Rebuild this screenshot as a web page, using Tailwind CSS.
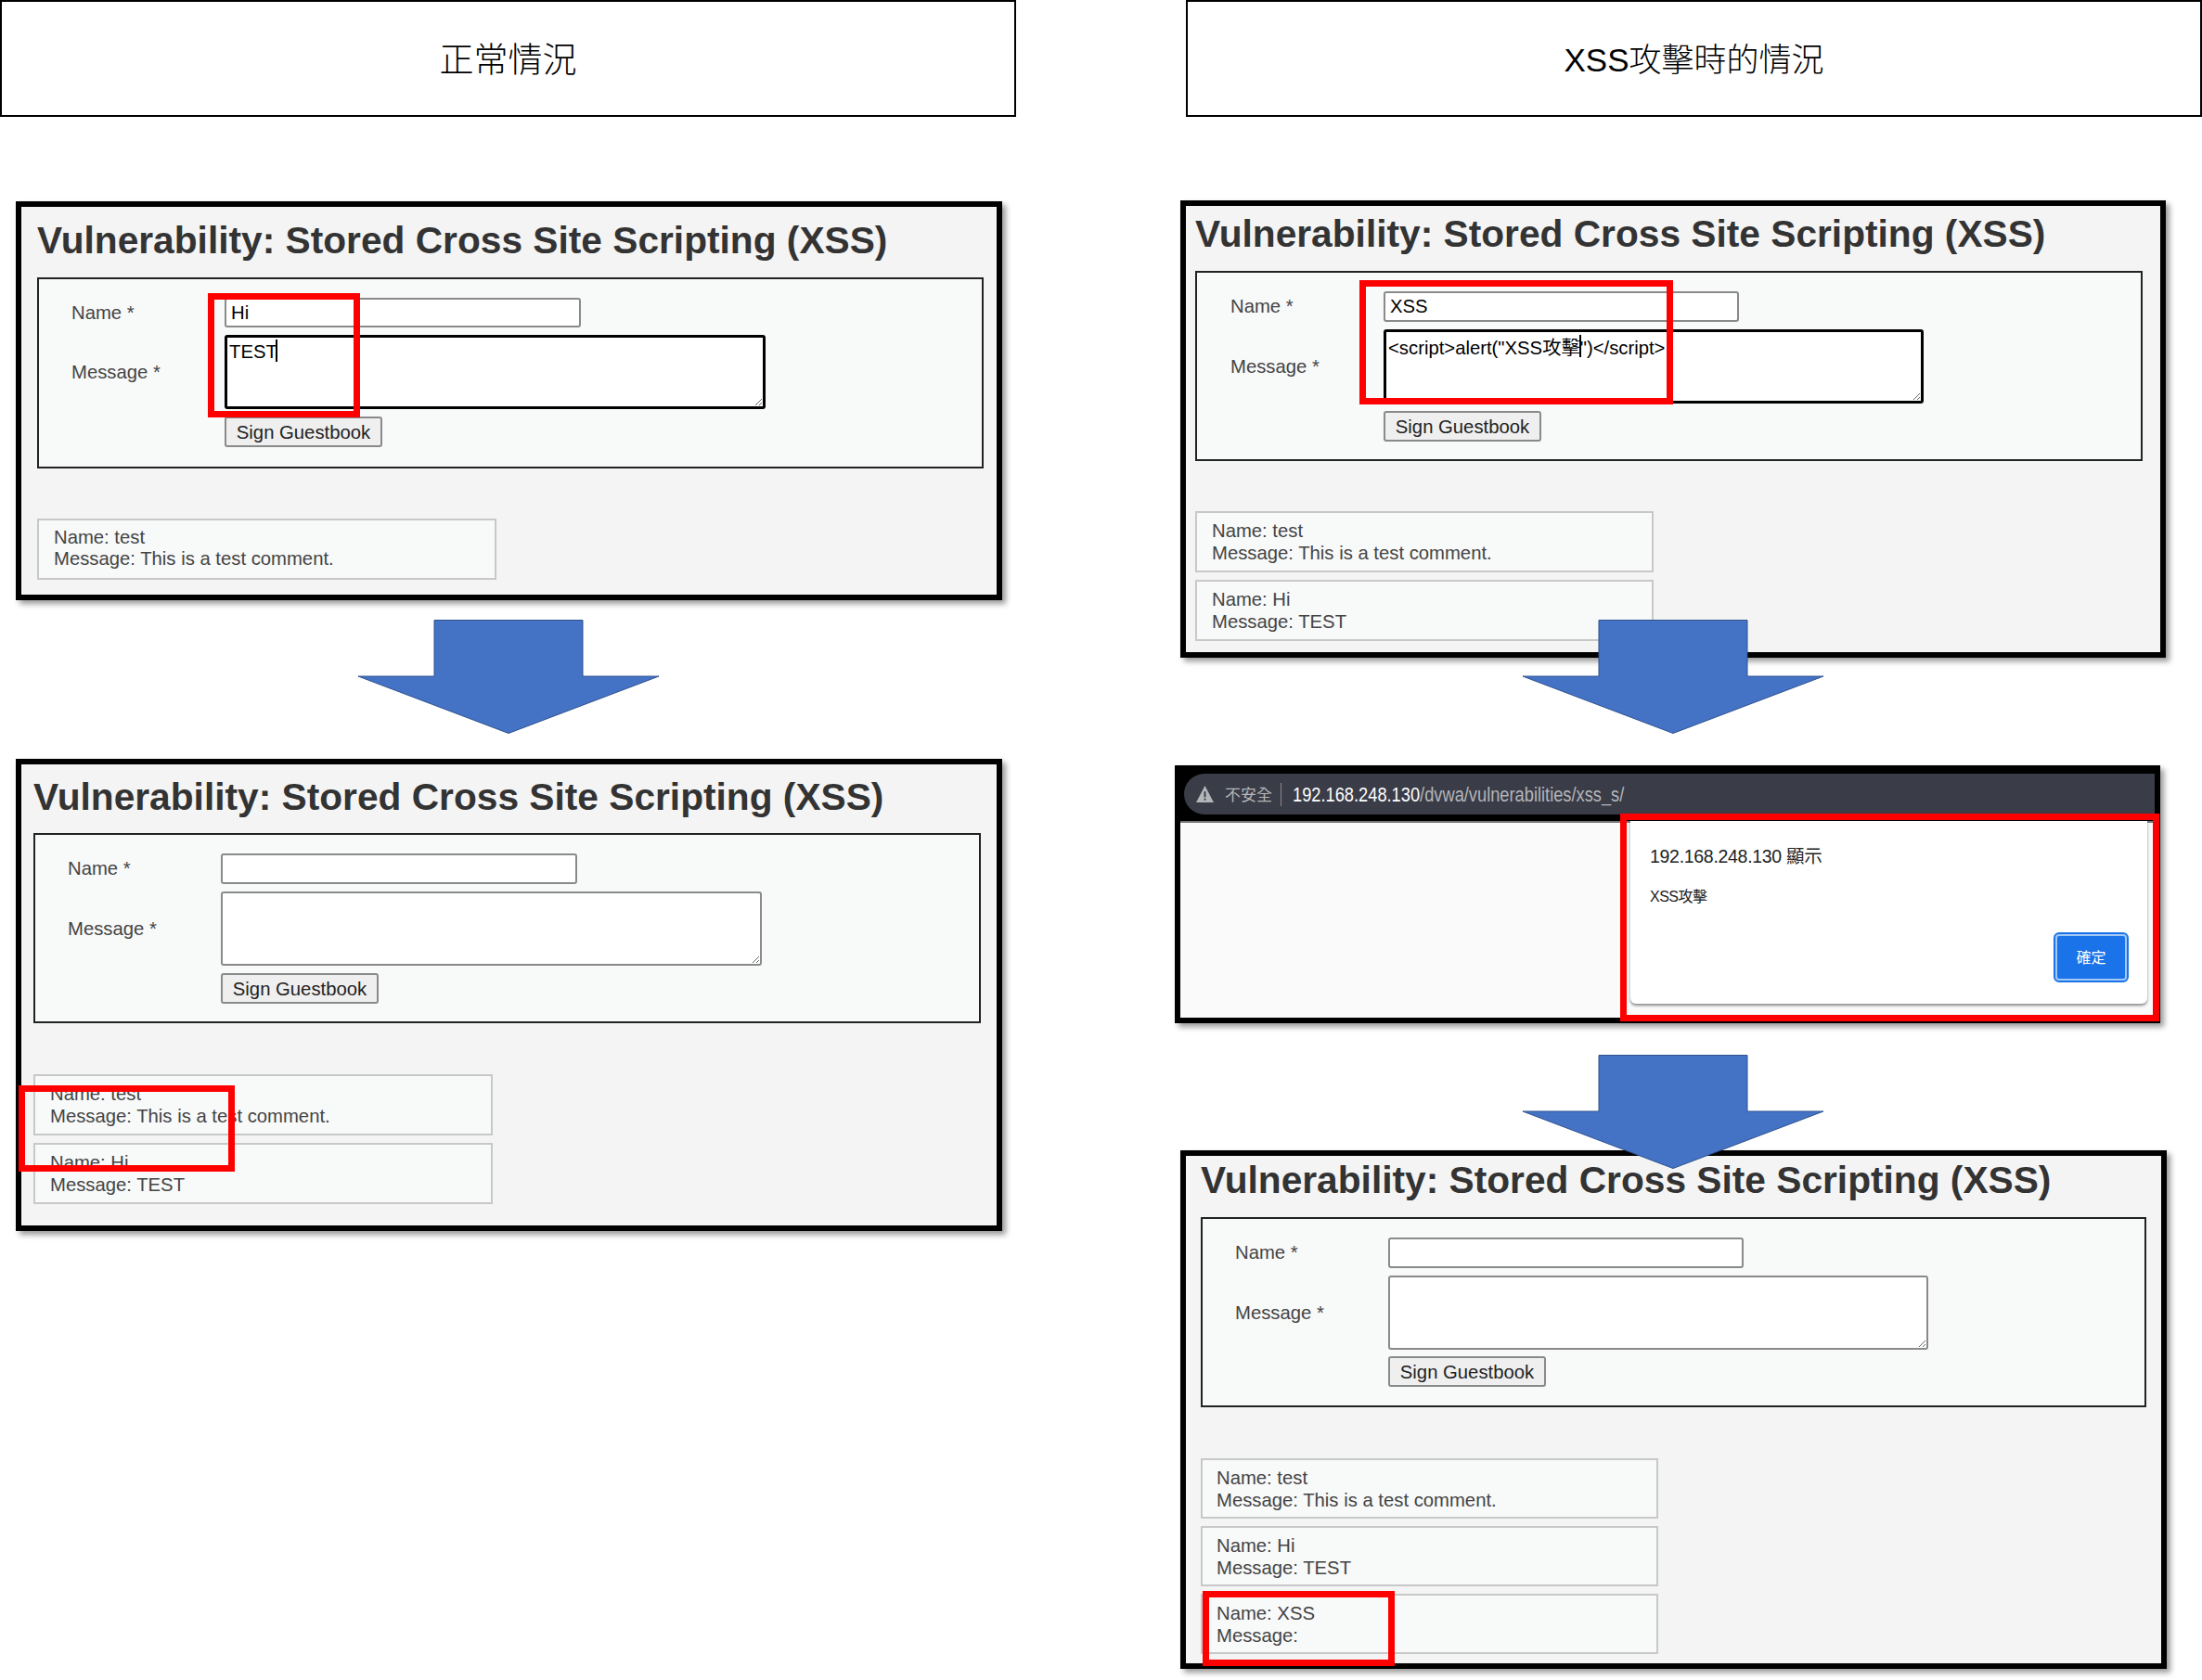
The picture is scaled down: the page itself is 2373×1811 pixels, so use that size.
<!DOCTYPE html>
<html lang="zh-Hant">
<head>
  <meta charset="UTF-8" />
  <script src="https://cdn.jsdelivr.net/npm/@tailwindcss/browser@4"></script>
  <title>XSS</title>
</head>
<body class="bg-white">
<div class="relative w-[2373px] h-[1811px] overflow-hidden bg-white text-[#333] font-['Liberation_Sans','Noto_Sans_CJK_TC',sans-serif]">

  <!-- Column titles -->
  <div class="absolute left-0 top-0 w-[1095px] h-[126px] border-2 border-black flex items-center justify-center text-[37px] font-light text-black font-['Noto_Sans_CJK_TC',sans-serif]">正常情況</div>
  <div class="absolute left-[1278px] top-0 w-[1095px] h-[126px] border-2 border-black flex items-center justify-center pt-[5px] text-[35px] font-light text-black font-['Liberation_Sans','Noto_Sans_CJK_TC',sans-serif]">XSS攻擊時的情況</div>

  <!-- Normal: before -->
  <div class="absolute left-[17px] top-[217px] w-[1063px] h-[430px] border-[6px] border-black bg-[#f4f4f4] shadow-[4px_4px_6px_rgba(0,0,0,0.4)] pl-[17px] pr-[14px] pt-[12px]">
    <h1 class="h-[50px] mb-[14px] flex items-center text-[40.7px] font-bold whitespace-nowrap">Vulnerability: Stored Cross Site Scripting (XSS)</h1>
    <div class="h-[206px] border-2 border-[#222] bg-[#f8f9f9] pl-[35px] pt-[20px] text-[20.3px] text-[#444]">
      <div class="flex items-center h-[32px] mb-[8px]">
        <span class="w-[165px]">Name *</span>
        <input value="Hi" class="w-[384px] h-[32px] bg-white border-2 border-[#8a8a8a] rounded-[3px] px-[5px] text-black" />
      </div>
      <div class="flex items-center h-[80px] mb-[8px]">
        <span class="w-[165px]">Message *</span>
        <div class="relative">
          <textarea class="block w-[583px] h-[80px] bg-white border-[3px] border-black rounded-[3px] px-[2px] py-0 text-black">TEST</textarea>
          <span class="absolute left-[55px] top-[5px] w-[2px] h-[24px] bg-black"></span>
        </div>
      </div>
      <div class="pl-[165px]">
        <button class="w-[170px] h-[33px] bg-[#efefef] border-2 border-[#8a8a8a] rounded-[3px] text-[#222]">Sign Guestbook</button>
      </div>
    </div>
    <div class="mt-[54px] flex flex-col gap-[8px] text-[20.3px] leading-[23px] text-[#444]">
      <div class="w-[495px] h-[66px] border-2 border-[#c8c8c8] bg-[#f8f9f9] pl-[16px] pt-[7px]">Name: test<br />Message: This is a test comment.</div>
    </div>
  </div>

  <!-- Normal: after -->
  <div class="absolute left-[17px] top-[818px] w-[1063px] h-[509px] border-[6px] border-black bg-[#f4f4f4] shadow-[4px_4px_6px_rgba(0,0,0,0.4)] pl-[13px] pr-[17px] pt-[11px]">
    <h1 class="h-[50px] mb-[13px] flex items-center text-[40.7px] font-bold whitespace-nowrap">Vulnerability: Stored Cross Site Scripting (XSS)</h1>
    <div class="h-[205px] border-2 border-[#222] bg-[#f8f9f9] pl-[35px] pt-[20px] text-[20.3px] text-[#444]">
      <div class="flex items-center h-[33px] mb-[8px]">
        <span class="w-[165px]">Name *</span>
        <input class="w-[384px] h-[33px] bg-white border-2 border-[#8a8a8a] rounded-[3px] px-[5px]" />
      </div>
      <div class="flex items-center h-[80px] mb-[8px]">
        <span class="w-[165px]">Message *</span>
        <textarea class="block w-[583px] h-[80px] bg-white border-2 border-[#8a8a8a] rounded-[3px]"></textarea>
      </div>
      <div class="pl-[165px]">
        <button class="w-[170px] h-[33px] bg-[#efefef] border-2 border-[#8a8a8a] rounded-[3px] text-[#222]">Sign Guestbook</button>
      </div>
    </div>
    <div class="mt-[55px] flex flex-col gap-[8px] text-[20.3px] leading-[24px] text-[#444]">
      <div class="w-[495px] h-[66px] border-2 border-[#c8c8c8] bg-[#f8f9f9] pl-[16px] pt-[7px]">Name: test<br />Message: This is a test comment.</div>
      <div class="w-[495px] h-[66px] border-2 border-[#c8c8c8] bg-[#f8f9f9] pl-[16px] pt-[7px]">Name: Hi<br />Message: TEST</div>
    </div>
  </div>

  <!-- XSS: before -->
  <div class="absolute left-[1272px] top-[216px] w-[1062px] h-[493px] border-[6px] border-black bg-[#f4f4f4] shadow-[4px_4px_6px_rgba(0,0,0,0.4)] pl-[10px] pr-[19px] pt-[6px]">
    <h1 class="h-[50px] mb-[14px] flex items-center text-[40.7px] font-bold whitespace-nowrap">Vulnerability: Stored Cross Site Scripting (XSS)</h1>
    <div class="h-[205px] border-2 border-[#222] bg-[#f8f9f9] pl-[36px] pt-[20px] text-[20.3px] text-[#444]">
      <div class="flex items-center h-[33px] mb-[8px]">
        <span class="w-[165px]">Name *</span>
        <input value="XSS" class="w-[383px] h-[33px] bg-white border-2 border-[#8a8a8a] rounded-[3px] px-[5px] text-black" />
      </div>
      <div class="flex items-center h-[80px] mb-[8px]">
        <span class="w-[165px]">Message *</span>
        <div class="relative">
          <textarea class="block w-[582px] h-[80px] bg-white border-[3px] border-black rounded-[3px] px-[2px] pt-[2px] pb-0 text-black">&lt;script&gt;alert("XSS攻擊")&lt;/script&gt;</textarea>
          <span class="absolute left-[211px] top-[6px] w-[2px] h-[24px] bg-black"></span>
        </div>
      </div>
      <div class="pl-[165px]">
        <button class="w-[170px] h-[33px] bg-[#efefef] border-2 border-[#8a8a8a] rounded-[3px] text-[#222]">Sign Guestbook</button>
      </div>
    </div>
    <div class="mt-[54px] flex flex-col gap-[8px] text-[20.3px] leading-[24px] text-[#444]">
      <div class="w-[494px] h-[66px] border-2 border-[#c8c8c8] bg-[#f8f9f9] pl-[16px] pt-[7px]">Name: test<br />Message: This is a test comment.</div>
      <div class="w-[494px] h-[66px] border-2 border-[#c8c8c8] bg-[#f8f9f9] pl-[16px] pt-[7px]">Name: Hi<br />Message: TEST</div>
    </div>
  </div>

  <!-- XSS: alert dialog -->
  <div class="absolute left-[1266px] top-[825px] w-[1062px] h-[278px] border-[6px] border-black bg-black shadow-[4px_4px_6px_rgba(0,0,0,0.4)] flex flex-col">
    <div class="h-[54px] pl-[4px] pt-[3px] shrink-0">
      <div class="h-[44px] rounded-l-[22px] bg-[#3a3c47] flex items-center pl-[13px] text-[#b4b5b9]">
        <svg viewBox="0 0 20 19" class="w-[19px] h-[18px] shrink-0"><path d="M10 0 L20 19 L0 19 Z" fill="#b4b5b9"/><rect x="9" y="6.5" width="2" height="6.5" fill="#3a3c47"/><rect x="9" y="14.5" width="2" height="2" fill="#3a3c47"/></svg>
        <span class="ml-[12px] w-[60px] text-[17px] font-['Noto_Sans_CJK_TC',sans-serif]">不安全</span>
        <span class="w-px h-[25px] bg-[#8a8b92]"></span>
        <span class="ml-[12px] text-[22px] scale-x-[0.83] origin-left whitespace-nowrap"><span class="text-white">192.168.248.130</span>/dvwa/vulnerabilities/xss_s/</span>
      </div>
    </div>
    <div class="flex-1 bg-[#fafafa] border-t-2 border-[#777] relative">
      <div class="absolute left-[485px] -top-[2px] w-[557px] h-[197px] bg-white rounded-b-[6px] shadow-[0_2px_3px_rgba(0,0,0,0.45)] pl-[21px] pt-[24px] flex flex-col">
        <span class="text-[19.5px] leading-[28px] text-[#222] tracking-[-0.3px]">192.168.248.130 顯示</span>
        <span class="mt-[16px] text-[16px] leading-[28px] text-[#222] tracking-[-0.5px]">XSS攻擊</span>
        <button class="absolute left-[456px] top-[120px] w-[81px] h-[54px] rounded-[6px] bg-[#1a73e8] border-2 border-[#1a73e8] outline-2 -outline-offset-4 outline-white/60 text-white text-[16px] pb-[2px] font-['Noto_Sans_CJK_TC',sans-serif]">確定</button>
      </div>
    </div>
  </div>

  <!-- XSS: after -->
  <div class="absolute left-[1272px] top-[1240px] w-[1063px] h-[559px] border-[6px] border-black bg-[#f4f4f4] shadow-[4px_4px_6px_rgba(0,0,0,0.4)] pl-[16px] pr-[16px] pt-[2px]">
    <h1 class="h-[50px] mb-[14px] flex items-center text-[40.7px] font-bold whitespace-nowrap">Vulnerability: Stored Cross Site Scripting (XSS)</h1>
    <div class="h-[205px] border-2 border-[#222] bg-[#f8f9f9] pl-[35px] pt-[20px] text-[20.3px] text-[#444]">
      <div class="flex items-center h-[33px] mb-[8px]">
        <span class="w-[165px]">Name *</span>
        <input class="w-[383px] h-[33px] bg-white border-2 border-[#8a8a8a] rounded-[3px] px-[5px]" />
      </div>
      <div class="flex items-center h-[80px] mb-[7px]">
        <span class="w-[165px]">Message *</span>
        <textarea class="block w-[582px] h-[80px] bg-white border-2 border-[#8a8a8a] rounded-[3px]"></textarea>
      </div>
      <div class="pl-[165px]">
        <button class="w-[170px] h-[33px] bg-[#efefef] border-2 border-[#8a8a8a] rounded-[3px] text-[#222]">Sign Guestbook</button>
      </div>
    </div>
    <div class="mt-[55px] flex flex-col gap-[8px] text-[20.3px] leading-[24px] text-[#444]">
      <div class="w-[493px] h-[65px] border-2 border-[#c8c8c8] bg-[#f8f9f9] pl-[15px] pt-[7px]">Name: test<br />Message: This is a test comment.</div>
      <div class="w-[493px] h-[65px] border-2 border-[#c8c8c8] bg-[#f8f9f9] pl-[15px] pt-[7px]">Name: Hi<br />Message: TEST</div>
      <div class="w-[493px] h-[65px] border-2 border-[#c8c8c8] bg-[#f8f9f9] pl-[15px] pt-[7px]">Name: XSS<br />Message:</div>
    </div>
  </div>

  <!-- Flow arrows -->
  <svg viewBox="0 0 326 123" class="absolute left-[385px] top-[668px] w-[326px] h-[123px]"><polygon points="83,0.5 243,0.5 243,61 325,61 163,122.5 1,61 83,61" fill="#4472c4" stroke="#2f528f" stroke-width="1"/></svg>
  <svg viewBox="0 0 326 123" class="absolute left-[1640px] top-[668px] w-[326px] h-[123px]"><polygon points="83,0.5 243,0.5 243,61 325,61 163,122.5 1,61 83,61" fill="#4472c4" stroke="#2f528f" stroke-width="1"/></svg>
  <svg viewBox="0 0 326 123" class="absolute left-[1640px] top-[1137px] w-[326px] h-[123px]"><polygon points="83,0.5 243,0.5 243,61 325,61 163,122.5 1,61 83,61" fill="#4472c4" stroke="#2f528f" stroke-width="1"/></svg>

  <!-- Red highlight boxes -->
  <div class="absolute left-[224px] top-[316px] w-[164px] h-[134px] border-[7px] border-[#ff0000]"></div>
  <div class="absolute left-[20px] top-[1170px] w-[233px] h-[93px] border-[7px] border-[#ff0000]"></div>
  <div class="absolute left-[1465px] top-[302px] w-[338px] h-[134px] border-[7px] border-[#ff0000]"></div>
  <div class="absolute left-[1746px] top-[877px] w-[581px] h-[224px] border-[7px] border-[#ff0000]"></div>
  <div class="absolute left-[1296px] top-[1715px] w-[207px] h-[81px] border-[7px] border-[#ff0000]"></div>
</div>
</body>
</html>
